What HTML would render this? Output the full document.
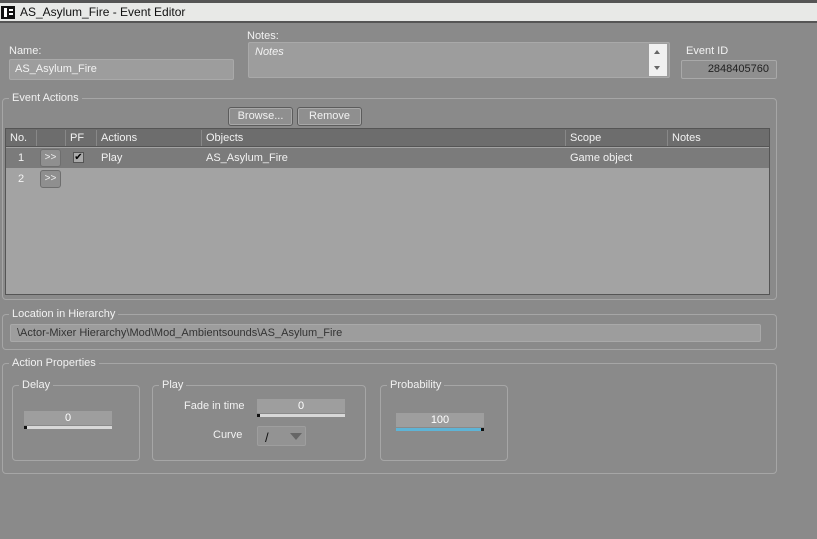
<!DOCTYPE html>
<html><head><style>
*{box-sizing:border-box;margin:0;padding:0}
body{width:817px;height:539px;background:#8a8a8a;font-family:"Liberation Sans",sans-serif;font-size:11px;color:#f2f2f2;position:relative;overflow:hidden}
.a{position:absolute}
.grp{position:absolute;border:1px solid #a6a6a6;border-radius:4px}
.lg{position:absolute;background:#8a8a8a;padding:0 3px;top:-8px;left:6px;line-height:14px}
.fld{position:absolute;background:#9d9d9d;border:1px solid #a9a9a9;border-radius:2px}
.btn{position:absolute;background:#8f8f8f;border:1px solid #5c5c5c;border-radius:3px;box-shadow:inset 0 0 0 1px #a8a8a8;text-align:center;line-height:16px}
.ar{position:absolute;width:21px;height:18px;background:#8f8f8f;border:1px solid #6e6e6e;border-radius:3px;text-align:center;line-height:16px;font-size:10px;color:#eee}
.sl{position:absolute;background:#9e9e9e;height:14px;text-align:center;line-height:14px;color:#fff}
</style></head><body>
<div class="a" style="left:0;top:0;width:817px;height:3px;background:#555"></div>
<div class="a" style="left:0;top:3px;width:817px;height:20px;background:#e8e9e7;border-bottom:2px solid #555"></div>
<div class="a" style="left:1px;top:6px;width:14px;height:13px;background:#111"><div class="a" style="left:3px;top:2px;width:3px;height:9px;background:#fff"></div><div class="a" style="left:8px;top:3px;width:4px;height:2px;background:#fff"></div><div class="a" style="left:8px;top:7px;width:4px;height:2px;background:#fff"></div></div>
<div class="a" style="left:20px;top:5px;color:#111;font-size:12px">AS_Asylum_Fire - Event Editor</div>

<div class="a" style="left:9px;top:45px">Name:</div>
<div class="fld" style="left:9px;top:59px;width:225px;height:21px;padding:3px 5px">AS_Asylum_Fire</div>
<div class="a" style="left:247px;top:30px">Notes:</div>
<div class="fld" style="left:248px;top:42px;width:422px;height:36px;padding:3px 6px;font-style:italic">Notes</div>
<div class="a" style="left:649px;top:44px;width:18px;height:32px;background:#f0f0f0"><div class="a" style="left:5px;top:6px;border:3px solid transparent;border-bottom:4px solid #666;border-top:0"></div><div class="a" style="left:5px;top:22px;border:3px solid transparent;border-top:4px solid #666;border-bottom:0"></div></div>
<div class="a" style="left:686px;top:45px">Event ID</div>
<div class="fld" style="left:681px;top:60px;width:96px;height:19px;background:#8f8f8f;text-align:right;padding:2px 7px;color:#222">2848405760</div>

<div class="grp" style="left:2px;top:98px;width:775px;height:202px"><div class="lg">Event Actions</div></div>
<div class="btn" style="left:228px;top:107px;width:65px;height:19px">Browse...</div>
<div class="btn" style="left:297px;top:107px;width:65px;height:19px">Remove</div>
<div class="a" style="left:5px;top:128px;width:765px;height:167px;background:#a3a3a3;border:1px solid #555"></div>
<div class="a" style="left:6px;top:129px;width:763px;height:18px;background:#6d6d6d;border-bottom:1px solid #555"></div>
<div class="a" style="left:10px;top:132px">No.</div>
<div class="a" style="left:36px;top:130px;width:1px;height:16px;background:#888"></div>
<div class="a" style="left:65px;top:130px;width:1px;height:16px;background:#888"></div>
<div class="a" style="left:70px;top:132px">PF</div>
<div class="a" style="left:96px;top:130px;width:1px;height:16px;background:#888"></div>
<div class="a" style="left:101px;top:132px">Actions</div>
<div class="a" style="left:201px;top:130px;width:1px;height:16px;background:#888"></div>
<div class="a" style="left:206px;top:132px">Objects</div>
<div class="a" style="left:565px;top:130px;width:1px;height:16px;background:#888"></div>
<div class="a" style="left:570px;top:132px">Scope</div>
<div class="a" style="left:667px;top:130px;width:1px;height:16px;background:#888"></div>
<div class="a" style="left:672px;top:132px">Notes</div>
<div class="a" style="left:6px;top:148px;width:763px;height:20px;background:#7b7b7b"></div>
<div class="a" style="left:18px;top:152px">1</div>
<div class="ar" style="left:40px;top:149px">&gt;&gt;</div>
<div class="a" style="left:73px;top:152px;width:11px;height:11px;background:#aaa;border:1px solid #555;color:#000;font-size:10px;line-height:9px;text-align:center">✔</div>
<div class="a" style="left:101px;top:152px">Play</div>
<div class="a" style="left:206px;top:152px">AS_Asylum_Fire</div>
<div class="a" style="left:570px;top:152px">Game object</div>
<div class="a" style="left:18px;top:173px">2</div>
<div class="ar" style="left:40px;top:170px">&gt;&gt;</div>

<div class="grp" style="left:2px;top:314px;width:775px;height:36px"><div class="lg">Location in Hierarchy</div></div>
<div class="fld" style="left:10px;top:324px;width:751px;height:18px;padding:2px 6px;color:#333">\Actor-Mixer Hierarchy\Mod\Mod_Ambientsounds\AS_Asylum_Fire</div>

<div class="grp" style="left:2px;top:363px;width:775px;height:111px"><div class="lg">Action Properties</div></div>
<div class="grp" style="left:12px;top:385px;width:128px;height:76px"><div class="lg">Delay</div></div>
<div class="sl" style="left:24px;top:411px;width:88px">0</div>
<div class="a" style="left:24px;top:426px;width:88px;height:3px;background:#d8d8d8;border-left:3px solid #111"></div>
<div class="grp" style="left:152px;top:385px;width:214px;height:76px"><div class="lg">Play</div></div>
<div class="a" style="left:184px;top:400px">Fade in time</div>
<div class="sl" style="left:257px;top:399px;width:88px">0</div>
<div class="a" style="left:257px;top:414px;width:88px;height:3px;background:#d8d8d8;border-left:3px solid #111"></div>
<div class="a" style="left:213px;top:429px">Curve</div>
<div class="a" style="left:257px;top:426px;width:49px;height:20px;background:#939393;border:1px solid #9e9e9e;border-radius:2px"><div class="a" style="left:7px;top:3px;font-size:13px;color:#111">/</div><div class="a" style="left:32px;top:6px;border:6px solid transparent;border-top:7px solid #666;border-bottom:0"></div></div>
<div class="grp" style="left:380px;top:385px;width:128px;height:76px"><div class="lg">Probability</div></div>
<div class="sl" style="left:396px;top:413px;width:88px">100</div>
<div class="a" style="left:396px;top:428px;width:88px;height:3px;background:#5eb4d6;border-right:3px solid #111"></div>
</body></html>
